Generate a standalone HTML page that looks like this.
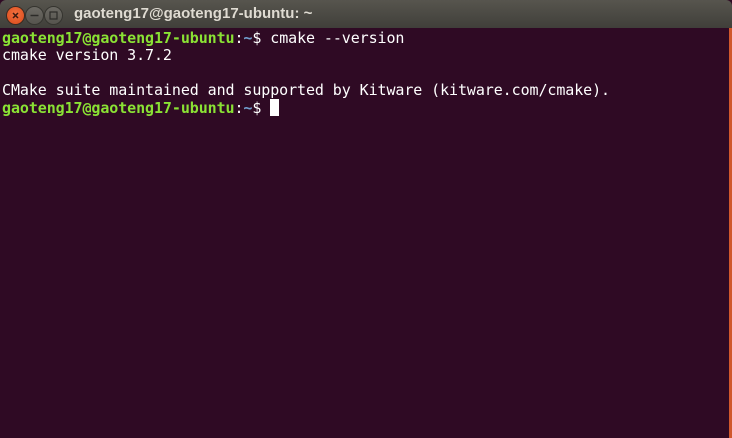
<!DOCTYPE html>
<html><head><meta charset="utf-8"><style>
html,body{margin:0;padding:0;}
body{width:732px;height:438px;overflow:hidden;background:#2f0a24;position:relative;font-family:"DejaVu Sans Mono","Liberation Mono",monospace;}
.tb{position:absolute;left:0;top:0;width:732px;height:28px;background:linear-gradient(#57554e,#403f3a);border-radius:6px 6px 0 0;}
.btn{position:absolute;top:6px;width:19px;height:19px;border-radius:50%;box-sizing:border-box;}
.c{left:6px;background:radial-gradient(circle at 50% 40%,#f2703f,#d94a1a);border:1px solid #3a2a22;}
.m,.x{background:linear-gradient(#6c6a64,#56544e);border:1px solid #35342f;}
.m{left:25px}.x{left:44px}
.btn svg{position:absolute;left:0;top:0}
.title{position:absolute;left:74px;top:5px;font:bold 15px "Liberation Sans","DejaVu Sans",sans-serif;color:#dfdbd2;}
.strip{position:absolute;right:0;top:28px;width:3px;height:410px;background:#d0582c;}
pre{position:absolute;left:2px;top:30px;margin:0;font-size:15px;letter-spacing:-0.09px;line-height:17.3px;color:#ffffff;font-family:inherit;}
.g{color:#8ae234;font-weight:bold}.b{color:#729fcf;font-weight:bold}
.cur{display:inline-block;width:9px;height:17px;background:#fff;vertical-align:-3px;}
</style></head><body>
<div class="tb">
<div class="btn c"><svg width="17" height="17"><path d="M6 6L11 11M11 6L6 11" stroke="#3a1a10" stroke-width="1.5"/></svg></div>
<div class="btn m"><svg width="17" height="17"><path d="M4.5 8.5H12.5" stroke="#2c2b28" stroke-width="1.5"/></svg></div>
<div class="btn x"><svg width="17" height="17"><rect x="5" y="5" width="7" height="7" fill="none" stroke="#2c2b28" stroke-width="1.2"/></svg></div>
<div class="title">gaoteng17@gaoteng17-ubuntu: ~</div>
</div>
<div class="strip"></div>
<pre><span class="g">gaoteng17@gaoteng17-ubuntu</span>:<span class="b">~</span>$ cmake --version
cmake version 3.7.2

CMake suite maintained and supported by Kitware (kitware.com/cmake).
<span class="g">gaoteng17@gaoteng17-ubuntu</span>:<span class="b">~</span>$ <span class="cur"></span></pre>
</body></html>
